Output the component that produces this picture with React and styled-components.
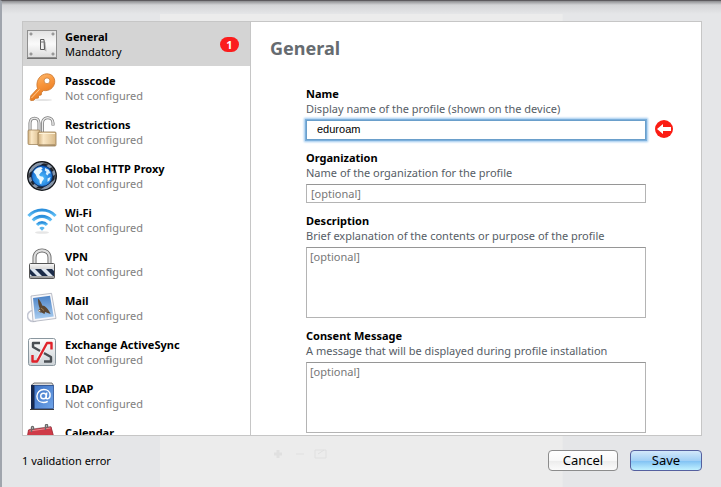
import React from 'react';
import styled, { createGlobalStyle, css } from 'styled-components';

const GeneralIcon = () => (
	<Icon viewBox="0 0 30 32">
		<defs>
			<linearGradient id="plate" x1="0" y1="0" x2="0" y2="1">
				<stop offset="0" stopColor="#e2e2e2" />
				<stop offset="0.5" stopColor="#fafafa" />
				<stop offset="1" stopColor="#dcdcdc" />
			</linearGradient>
		</defs>
		<rect x="0.5" y="2.5" width="29" height="27" fill="url(#plate)" stroke="#8f8f8f" />
		<path d="M0 30.5h30" stroke="#6f6f6f" />
		<g fill="#c4c4c4" stroke="#777" strokeWidth="0.8">
			<circle cx="4" cy="6" r="1.1" />
			<circle cx="26" cy="6" r="1.1" />
			<circle cx="4" cy="26" r="1.1" />
			<circle cx="26" cy="26" r="1.1" />
		</g>
		<path d="M17.500 22.500l2 1-1-9-1.500-2z" fill="#b5b5b5" />
		<path d="M13.500 11.500h3.500l.5 10h-4z" fill="#f2f2f2" stroke="#4a4a4a" strokeWidth="0.9" />
		<path d="M13.500 14h3.500" stroke="#777" />
	</Icon>
);

const KeyIcon = () => (
	<Icon viewBox="0 0 30 32">
		<defs>
			<linearGradient id="key" x1="0" y1="0" x2="0.4" y2="1">
				<stop offset="0" stopColor="#ffc27a" />
				<stop offset="0.5" stopColor="#f9963c" />
				<stop offset="1" stopColor="#e5761b" />
			</linearGradient>
		</defs>
		<ellipse cx="16" cy="28" rx="9" ry="1" fill="#e4e4e4" />
		<path
			d="M17.500 2.200c5.500-1.600 10.800 2.100 10.200 8.100-.6 5.500-5.700 9.200-11.200 8.200l-2 2.200-.3 2.300-2.600.5-.2 2.600-2.900.3-1.700 1.900-3 .3-.6-.9.600-3.900 6.700-7.200C8.600 10.500 11.500 3.900 17.500 2.200z"
			fill="url(#key)"
			stroke="#c9752c"
			strokeWidth="0.8"
		/>
		<path d="M4.500 26l8-8.500" stroke="#ffd09a" strokeWidth="0.9" />
		<circle cx="20" cy="8.800" r="2.900" fill="#fff" stroke="#c9813f" strokeWidth="0.8" />
	</Icon>
);

const LocksIcon = () => (
	<Icon viewBox="0 0 30 32">
		<defs>
			<linearGradient id="brass" x1="0" y1="0" x2="1" y2="0">
				<stop offset="0" stopColor="#cfae7b" />
				<stop offset="0.3" stopColor="#fbe8c6" />
				<stop offset="1" stopColor="#d8b988" />
			</linearGradient>
		</defs>
		<path d="M3 15V7c0-6.500 9-6.500 9 0v8" fill="none" stroke="#777" strokeWidth="3" />
		<path d="M3 15V7c0-6.500 9-6.500 9 0v8" fill="none" stroke="#e6e6e6" strokeWidth="1.500" />
		<rect x="1" y="14" width="12" height="14.500" rx="1" fill="url(#brass)" stroke="#957a50" strokeWidth="0.7" />
		<path d="M15.500 17V7c0-7 10.500-7 10.500 0v2.500" fill="none" stroke="#777" strokeWidth="3" />
		<path d="M15.500 17V7c0-7 10.500-7 10.500 0v2" fill="none" stroke="#ececec" strokeWidth="1.500" />
		<rect x="11" y="16" width="18" height="14" rx="1" fill="url(#brass)" stroke="#957a50" strokeWidth="0.8" />
		<path d="M12 17.500h16" stroke="#fff3d8" />
		<path d="M12 29h16" stroke="#8d7450" />
	</Icon>
);

const GlobeIcon = () => (
	<Icon viewBox="0 0 30 32">
		<defs>
			<pattern id="tyre" width="8" height="8" patternUnits="userSpaceOnUse" patternTransform="rotate(55)">
				<rect width="8" height="8" fill="#20232a" />
				<rect width="4" height="8" fill="#8494a8" />
			</pattern>
			<radialGradient id="sea" cx="0.5" cy="0.6" r="0.6">
				<stop offset="0" stopColor="#4fc0ff" />
				<stop offset="1" stopColor="#0f62cc" />
			</radialGradient>
		</defs>
		<circle cx="15" cy="16" r="14.300" fill="url(#tyre)" stroke="#15181d" strokeWidth="1.400" />
		<circle cx="15" cy="16" r="13.200" fill="none" stroke="#9aa3ad" strokeWidth="0.5" />
		<circle cx="15" cy="16" r="10.500" fill="url(#sea)" stroke="#0a2f66" />
		<path
			d="M6.500 12c1.500-3 4-4.800 7.500-5l1.800 1.200-1.600 1.500 1.500 1.300-2 1.700-1.700 2.200 1.500 1.300 2.500.6 1 2-2 2.700-.8 3-1.500-1.300-.3-3.300-2.400-2.300-1.300-3z"
			fill="#e9f8ff"
		/>
		<path d="M18 8l3.700 1.700 2 3.500-2 .4-1 2-2-1.500.8-2.300-1.700-1.200zM20.500 18.500l3-1.500-1 3.500-2 1.400z" fill="#d9f1ff" />
	</Icon>
);

const WifiIcon = () => (
	<Icon viewBox="0 0 30 32">
		<defs>
			<linearGradient id="wave" x1="0" y1="0" x2="0" y2="1">
				<stop offset="0" stopColor="#2b8fdc" />
				<stop offset="1" stopColor="#64c2f7" />
			</linearGradient>
		</defs>
		<ellipse cx="15" cy="28.500" rx="7" ry="1.300" fill="#e6e6e6" />
		<g fill="none" stroke="url(#wave)" strokeWidth="3.200">
			<path d="M1.500 12c7.500-8 19.500-8 27 0" />
			<path d="M5.800 16.500c5.300-5.500 13.100-5.500 18.400 0" />
			<path d="M10 21c3-3.100 7-3.100 10 0" />
		</g>
		<path d="M12.300 23.900c1.500-1.500 3.900-1.500 5.400 0L15 26.800z" fill="#58b5ee" />
	</Icon>
);

const VpnIcon = () => (
	<Icon viewBox="0 0 30 32">
		<defs>
			<linearGradient id="steel" x1="0" y1="0" x2="0" y2="1">
				<stop offset="0" stopColor="#fafafa" />
				<stop offset="1" stopColor="#9a9a9a" />
			</linearGradient>
			<clipPath id="band">
				<rect x="3" y="21" width="24" height="7" />
			</clipPath>
		</defs>
		<path d="M7.500 17V9.500C7.500 0 22.500 0 22.500 9.500V17" fill="none" stroke="#666" strokeWidth="4" />
		<path d="M7.500 17V9.500C7.500 0 22.500 0 22.500 9.500V17" fill="none" stroke="#dedede" strokeWidth="2.200" />
		<rect x="2.500" y="15.500" width="25" height="15" rx="1" fill="url(#steel)" stroke="#555" />
		<g clipPath="url(#band)">
			<rect x="2" y="21" width="26" height="7" fill="#dde6f1" />
			<path d="M-2 21h5l7 7H5zM8 21h6l7 7h-6zM19 21h6l7 7h-6z" fill="#1c2c49" />
		</g>
	</Icon>
);

const MailIcon = () => (
	<Icon viewBox="0 0 30 32">
		<defs>
			<linearGradient id="sky" x1="0" y1="0" x2="0" y2="1">
				<stop offset="0" stopColor="#4b82c6" />
				<stop offset="1" stopColor="#a9cdf0" />
			</linearGradient>
		</defs>
		<circle cx="6" cy="24" r="5.500" fill="none" stroke="#c5c8d4" strokeWidth="1.600" />
		<path d="M4 4L24.500 1.300 29 26.500 6 29.500z" fill="#f7f7fa" stroke="#a9adb9" strokeWidth="0.8" />
		<path d="M6 6L23 3.700 26.700 24.500 8 27z" fill="url(#sky)" />
		<path
			d="M11 6.500c2 2 3.500 4.300 4.200 7l2.200.6c2.600 1.800 4.600 4.300 6.200 8-2-.9-3.700-1.600-5.500-2.100l-.6 1.900-2.900-1.300c-1.700 0-2.900-.8-3.600-2.200l1.800-1.800C11.500 13.500 11 10.500 11 6.500z"
			fill="#5b4631"
		/>
		<path d="M10.300 19.500l2.300-1.800 1.200 1.500z" fill="#e9e5da" />
		<path d="M14 16l3 2.500" stroke="#a8865a" strokeWidth="0.9" />
	</Icon>
);

const ExchangeIcon = () => (
	<Icon viewBox="0 0 30 32">
		<defs>
			<linearGradient id="tile" x1="0" y1="0" x2="0" y2="1">
				<stop offset="0" stopColor="#fdfdfd" />
				<stop offset="1" stopColor="#cdd3d7" />
			</linearGradient>
		</defs>
		<rect x="1.500" y="2.500" width="27" height="27" rx="2" fill="url(#tile)" stroke="#8a979f" />
		<g fill="none" strokeLinejoin="round">
			<path d="M13 7H6v4l18 10v4.500h-7" stroke="#4a4f54" strokeWidth="2.400" />
			<path d="M18.500 9.500L11.500 22.500" stroke="#f3f4f5" strokeWidth="4.500" />
			<path d="M24.500 13.500V7H20L10 25.500H5.500V19" stroke="#e0232b" strokeWidth="2.400" />
		</g>
	</Icon>
);

const LdapIcon = () => (
	<Icon viewBox="0 0 30 32">
		<defs>
			<linearGradient id="book" x1="0" y1="0" x2="1" y2="1">
				<stop offset="0" stopColor="#3d72c4" />
				<stop offset="1" stopColor="#6fa4e8" />
			</linearGradient>
		</defs>
		<path d="M4 5.500L7 3h18l1.500 2.500z" fill="#dcdcdc" stroke="#555" strokeWidth="0.8" />
		<path d="M4 5h4v24H4z" fill="#16284d" />
		<path d="M7.500 5.500h19v23h-19z" fill="url(#book)" stroke="#2a4f92" strokeWidth="0.8" />
		<path d="M3 29.500h24" stroke="#3c3c3c" />
		<g fill="none" stroke="#fff" strokeWidth="1.400">
			<circle cx="16.500" cy="16" r="2.800" />
			<path d="M19.800 12.500l-.7 5c0 2 4 1.800 4-2.300 0-3.500-2.800-5.700-6.200-5.700-4 0-7 3-7 6.700 0 4 3 6.300 6.500 6.300 1.700 0 3-.3 4.300-1.200" />
		</g>
	</Icon>
);

const CalendarIcon = () => (
	<Icon viewBox="0 0 30 32">
		<path d="M2 5.500L24 2.500 28 25 3 28z" fill="#f6f6f6" stroke="#aaa" />
		<path d="M1.500 6L24 3l2.500 9L0 14.500z" fill="#cf3b48" stroke="#a02733" strokeWidth="0.8" />
		<path d="M2.500 7L23.500 4" stroke="#ee8a90" />
		<g fill="none" stroke="#6b6b6b" strokeWidth="1.400">
			<path d="M4.500 8V3.500c0-1.500 2-1.500 2 0V6" />
			<path d="M18.500 6V1.500c0-1.500 2-1.500 2 0V4" />
		</g>
	</Icon>
);

const payloads = [
	{ name: 'General', status: 'Mandatory', icon: GeneralIcon, errors: 1, selected: true },
	{ name: 'Passcode', status: 'Not configured', icon: KeyIcon },
	{ name: 'Restrictions', status: 'Not configured', icon: LocksIcon },
	{ name: 'Global HTTP Proxy', status: 'Not configured', icon: GlobeIcon },
	{ name: 'Wi-Fi', status: 'Not configured', icon: WifiIcon },
	{ name: 'VPN', status: 'Not configured', icon: VpnIcon },
	{ name: 'Mail', status: 'Not configured', icon: MailIcon },
	{ name: 'Exchange ActiveSync', status: 'Not configured', icon: ExchangeIcon },
	{ name: 'LDAP', status: 'Not configured', icon: LdapIcon },
	{ name: 'Calendar', status: 'Not configured', icon: CalendarIcon },
];

const App = () => {
	return (
		<Sheet>
			<GlobalStyle />
			<Panel>
				<Sidebar>
					{payloads.map(({ name, status, icon: PayloadIcon, errors, selected }) => (
						<Payload key={name} type="button" $selected={selected}>
							<PayloadIcon />
							<PayloadText>
								<PayloadName>{name}</PayloadName>
								<PayloadStatus $selected={selected}>{status}</PayloadStatus>
							</PayloadText>
							{errors && <Badge>{errors}</Badge>}
						</Payload>
					))}
				</Sidebar>
				<Main>
					<Title>General</Title>
					<Form id="general">
						<Field>
							<Label htmlFor="name">Name</Label>
							<Hint>Display name of the profile (shown on the device)</Hint>
							<InputWrap>
								<NameInput id="name" defaultValue="eduroam" />
								<ErrorMark viewBox="0 0 18 18">
									<circle cx="9" cy="9" r="9" fill="#fb1d14" />
									<path d="M2 9l6-5v3h8v4H8v3z" fill="#fff" />
								</ErrorMark>
							</InputWrap>
						</Field>
						<Field>
							<Label htmlFor="organization">Organization</Label>
							<Hint>Name of the organization for the profile</Hint>
							<Input id="organization" placeholder="[optional]" />
						</Field>
						<Field>
							<Label htmlFor="description">Description</Label>
							<Hint>Brief explanation of the contents or purpose of the profile</Hint>
							<TextArea id="description" placeholder="[optional]" />
						</Field>
						<Field>
							<Label htmlFor="consent">Consent Message</Label>
							<Hint>A message that will be displayed during profile installation</Hint>
							<TextArea id="consent" placeholder="[optional]" />
						</Field>
					</Form>
				</Main>
			</Panel>
			<Footer>
				<FooterText>1 validation error</FooterText>
				<Ghost viewBox="0 0 56 12">
					<path d="M2 6h8M6 2v8" strokeWidth="3" />
					<path d="M24 6h8M43 2h11v8H43zM46 6l6-4" />
				</Ghost>
				<Button type="button">Cancel</Button>
				<Button type="submit" form="general" $primary>
					Save
				</Button>
			</Footer>
		</Sheet>
	);
};

const GlobalStyle = createGlobalStyle`
	* {
		box-sizing: border-box;
	}
	body {
		margin: 0;
		font: 11px/15px 'Lucida Grande', 'Noto Sans', 'Open Sans', sans-serif;
		color: #000;
	}
	button, input, textarea {
		font: inherit;
		color: inherit;
	}
`;
const Sheet = styled.div`
	display: flex;
	flex-direction: column;
	height: 100vh;
	padding: 20px 19px 0 20px;
	border-top: 1px solid #5d5a5e;
	border-left: 2px solid #a0a5ad;
	background:
		linear-gradient(rgba(80, 80, 84, 0.6), rgba(160, 160, 164, 0.25) 4px, transparent 13px),
		linear-gradient(#ececec, #ececec) 50% 13px / 56% 100% no-repeat,
		#e5e6e8;
`;
const Panel = styled.div`
	display: flex;
	flex: 1;
	min-height: 0;
	border: 1px solid #c6c6c6;
	background: #fff;
`;
const Sidebar = styled.nav`
	width: 228px;
	flex: none;
	overflow: hidden;
	border-right: 1px solid #c6c6c6;
`;
const Payload = styled.button`
	display: flex;
	align-items: center;
	width: 100%;
	height: 44px;
	padding: 0 11px 0 4px;
	border: none;
	background: ${({ $selected }) => ($selected ? '#d4d4d4' : 'transparent')};
	text-align: left;
`;
const Icon = styled.svg`
	width: 30px;
	height: 32px;
	flex: none;
`;
const PayloadText = styled.span`
	display: flex;
	flex-direction: column;
	flex: 1;
	margin-left: 8px;
`;
const PayloadName = styled.span`
	font-weight: bold;
`;
const PayloadStatus = styled.span`
	color: ${({ $selected }) => ($selected ? '#000' : '#808080')};
`;
const Badge = styled.span`
	width: 19px;
	border-radius: 8px;
	background: #fb1d1d;
	color: #fff;
	font-weight: bold;
	text-align: center;
`;
const Main = styled.main`
	flex: 1;
	min-width: 0;
	overflow: hidden;
	padding: 14px 55px 0;
`;
const Title = styled.h1`
	margin: 0 0 26px -36px;
	font-size: 18px;
	line-height: 24px;
	color: #666b70;
`;
const Form = styled.form`
	display: flex;
	flex-direction: column;
	gap: 10px;
`;
const Field = styled.div`
	display: flex;
	flex-direction: column;
`;
const Label = styled.label`
	font-weight: bold;
`;
const Hint = styled.span`
	margin-bottom: 4px;
	color: #565d66;
`;
const box = css`
	width: 100%;
	border: 1px solid #b4b4b4;
	border-top-color: #969696;
	border-radius: 0;
	background: #fff;
	outline: none;
	&::placeholder {
		color: #777;
		opacity: 1;
	}
`;
const Input = styled.input`
	${box}
	height: 19px;
	padding: 0 4px;
`;
const NameInput = styled.input`
	${box}
	display: block;
	height: 20px;
	padding: 0 10px 2px;
	border-color: #6a9fcb;
	box-shadow: 0 0 0 1px #7db0dc, 0 0 2px 2px #9cc8ee;
	font-family: 'Liberation Sans', Arial, sans-serif;
`;
const InputWrap = styled.div`
	position: relative;
`;
const ErrorMark = styled.svg`
	position: absolute;
	top: 0;
	right: -27px;
	width: 18px;
	height: 18px;
`;
const TextArea = styled.textarea`
	${box}
	display: block;
	height: 71px;
	padding: 1px 3px;
	resize: none;
`;
const Footer = styled.footer`
	display: flex;
	align-items: center;
	gap: 12px;
	height: 51px;
	padding-bottom: 2px;
	flex: none;
`;
const FooterText = styled.span`
	width: 238px;
`;
const Ghost = styled.svg`
	width: 56px;
	height: 12px;
	margin: -14px auto 0 0;
	fill: none;
	stroke: #e0e0e0;
`;
const Button = styled.button`
	height: 21px;
	min-width: ${({ $primary }) => ($primary ? '72px' : '70px')};
	padding: 0 12px;
	border: 1px solid ${({ $primary }) => ($primary ? '#55609f' : '#8c8c8c')};
	border-radius: 4px;
	background: ${({ $primary }) =>
		$primary
			? 'linear-gradient(#d3e8fa, #a2d0f6 50%, #7fc0f3 51%, #c0f1ff)'
			: 'linear-gradient(#fff, #f8f8f8 50%, #ececec 51%, #fbfbfb)'};
	font-size: 13px;
	line-height: 17px;
`;

export default App;
